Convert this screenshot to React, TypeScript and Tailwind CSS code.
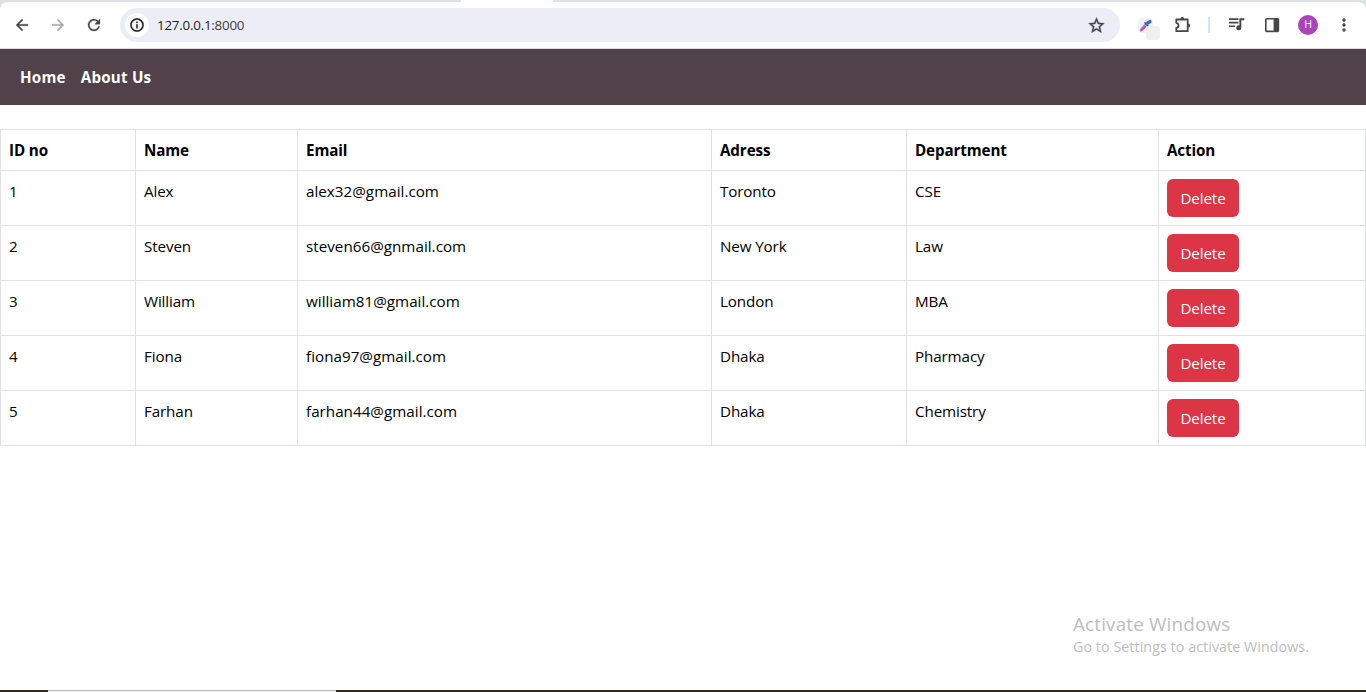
import React from "react";
import { MdMoreVert } from "react-icons/md";

type Student = { id: number; name: string; email: string; address: string; department: string };

const students: Student[] = [
  { id: 1, name: "Alex", email: "alex32@gmail.com", address: "Toronto", department: "CSE" },
  { id: 2, name: "Steven", email: "steven66@gnmail.com", address: "New York", department: "Law" },
  { id: 3, name: "William", email: "william81@gmail.com", address: "London", department: "MBA" },
  { id: 4, name: "Fiona", email: "fiona97@gmail.com", address: "Dhaka", department: "Pharmacy" },
  { id: 5, name: "Farhan", email: "farhan44@gmail.com", address: "Dhaka", department: "Chemistry" },
];

const headings = ["ID no", "Name", "Email", "Adress", "Department", "Action"];

const shapes = {
  back: "M20 11H7.83l5.59-5.59L12 4l-8 8 8 8 1.41-1.41L7.83 13H20v-2z",
  forward: "M12 4l-1.41 1.41L16.17 11H4v2h12.17l-5.58 5.59L12 20l8-8z",
  reload:
    "M17.65 6.35A7.958 7.958 0 0 0 12 4c-4.42 0-7.99 3.58-7.99 8s3.57 8 7.99 8c3.73 0 6.84-2.55 7.73-6h-2.08A5.99 5.99 0 0 1 12 18c-3.31 0-6-2.69-6-6s2.69-6 6-6c1.66 0 3.14.69 4.22 1.78L13 11h7V4l-2.35 2.35z",
  info: "M11 7h2v2h-2zM11 11h2v6h-2zM12 2C6.48 2 2 6.48 2 12s4.48 10 10 10 10-4.48 10-10S17.52 2 12 2zm0 18c-4.41 0-8-3.59-8-8s3.59-8 8-8 8 3.59 8 8-3.59 8-8 8z",
  star: "M22 9.24l-7.19-.62L12 2 9.19 8.63 2 9.24l5.46 4.73L5.82 21 12 17.27 18.18 21l-1.63-7.03L22 9.24zM12 15.4l-3.76 2.27 1-4.28-3.32-2.88 4.38-.38L12 6.1l1.71 4.04 4.38.38-3.32 2.88 1 4.28L12 15.4z",
};

function Glyph({ shape, size, weight, className }: { shape: keyof typeof shapes; size: number; weight: number; className: string }) {
  return (
    <svg className={className} width={size} height={size} viewBox="0 0 24 24" fill="currentColor" stroke="currentColor" strokeWidth={weight}>
      <path d={shapes[shape]} />
    </svg>
  );
}

function Dropper() {
  return (
    <span className="relative block h-[22px] w-[22px]">
      <span className="absolute left-0 top-0 h-[15px] w-[15px] rounded-sm bg-[#f1f3f4]" />
      <svg className="absolute left-0 top-0" width="16" height="16" viewBox="0 0 16 16">
        <path d="M3.2 12 7.4 7.4" stroke="#8f9bd6" strokeWidth="3.2" strokeLinecap="round" />
        <path d="M3.8 11.8 7 8.8" stroke="#f03c9c" strokeWidth="2" strokeLinecap="round" />
        <path d="M7 4.9 10 8.1" stroke="#2f5597" strokeWidth="1.5" strokeLinecap="round" />
        <path d="M9.2 5.4 12 3.6" stroke="#3470bd" strokeWidth="3.4" strokeLinecap="round" />
      </svg>
      <span className="absolute left-2 top-2 h-[14px] w-[14px] rounded-[3px] bg-[#f0f0f0]" />
    </span>
  );
}

function Puzzle() {
  return (
    <svg width="18" height="18" viewBox="0 0 18 18" fill="none">
      <path
        d="M3.3 3.5H14.7V15.2H3.3V11.9C4.7 11.6 5.5 10.7 5.5 9.4S4.7 7.1 3.3 6.8Z"
        stroke="#474747"
        strokeWidth="1.8"
        strokeLinejoin="round"
      />
      <path d="M7.2 3a2 2 0 0 1 4 0ZM15.2 7.4a2 2 0 0 1 0 4Z" fill="#474747" />
    </svg>
  );
}

function Toolbar() {
  return (
    <header className="flex h-[49px] flex-col bg-[#dee1e6]">
      <div className="flex h-[2px] justify-start">
        <span className="ml-[461px] h-[2px] w-[92px] bg-white" />
      </div>
      <div className="flex h-[47px] items-center rounded-t-lg border-b border-[#dadce0] bg-white">
        <Glyph shape="back" size={18} weight={0.4} className="ml-[13px] text-[#474747]" />
        <Glyph shape="forward" size={18} weight={0.3} className="ml-[18px] text-[#a9a9a9]" />
        <Glyph shape="reload" size={18} weight={0.4} className="ml-[18px] text-[#474747]" />
        <div className="ml-[17px] flex h-[34px] w-[1000px] items-center rounded-full bg-[#ebeef7]">
          <span className="ml-[5px] flex h-6 w-6 items-center justify-center rounded-full bg-white">
            <Glyph shape="info" size={16} weight={0.5} className="text-[#1f1f1f]" />
          </span>
          <span className="ml-2 text-[13.4px] leading-5 tracking-[-0.24px] text-[#3c4043]">
            <span className="text-[#1f1f1f]">127.0.0.1</span>:8000
          </span>
          <Glyph shape="star" size={19} weight={0.5} className="ml-auto mr-[14px] text-[#474747]" />
        </div>
        <span className="ml-[18px] mt-[7px]"><Dropper /></span>
        <span className="ml-[13px]"><Puzzle /></span>
        <span className="ml-[17px] h-4 w-[2px] bg-[#d3e3fd]" />
        <svg className="ml-[18px]" width="18" height="16" viewBox="0 0 18 16" fill="#474747">
          <path d="M1 1.2H10.4V2.9H1ZM1 4.8H10.4V6.5H1ZM1 8.4H7.1V10.1H1Z" />
          <path d="M11.4 1.2H16.3V3.2H13.3V10.8a2.5 2.5 0 1 1-1.9-2.4Z" />
        </svg>
        <svg className="ml-[18px]" width="16" height="16" viewBox="0 0 16 16">
          <rect x="1.8" y="1.8" width="12.6" height="12.6" rx="0.8" fill="none" stroke="#474747" strokeWidth="1.6" />
          <path d="M9.6 1.5H14.5V14.5H9.6Z" fill="#474747" />
        </svg>
        <span className="ml-[18px] flex h-5 w-5 items-center justify-center rounded-full bg-[#a945bb] text-[10.5px] text-white">H</span>
        <MdMoreVert className="ml-4 text-[#474747]" size={20} />
      </div>
    </header>
  );
}

function Cell({ children, head = false }: { children: React.ReactNode; head?: boolean }) {
  return (
    <div
      role={head ? "columnheader" : "cell"}
      className={
        head
          ? "border-b border-r border-[#dee2e6] p-2 font-bold tracking-[-0.12px]"
          : "border-b border-r border-[#dee2e6] p-2"
      }
    >
      {children}
    </div>
  );
}

function StudentTable() {
  return (
    <div
      role="table"
      className="mt-6 grid auto-rows-[55px] grid-cols-[135px_162px_414px_195px_252px_207px] grid-rows-[41px] border-l border-t border-[#dee2e6] text-[15.2px] leading-6 tracking-[-0.12px] text-black"
    >
      {headings.map((h) => (
        <Cell key={h} head>{h}</Cell>
      ))}
      {students.map((s) => (
        <React.Fragment key={s.id}>
          <Cell>{s.id}</Cell>
          <Cell>{s.name}</Cell>
          <Cell><span className="tracking-[0.02px]">{s.email}</span></Cell>
          <Cell>{s.address}</Cell>
          <Cell>{s.department}</Cell>
          <Cell>
            <button className="flex h-[38px] w-[72px] items-center justify-center rounded-md bg-[#dc3545] text-white">Delete</button>
          </Cell>
        </React.Fragment>
      ))}
    </div>
  );
}

export default function App() {
  return (
    <div className="flex h-[692px] w-[1366px] flex-col overflow-hidden bg-white font-['Open_Sans','Noto_Sans',sans-serif]">
      <Toolbar />
      <nav className="flex h-14 shrink-0 items-center gap-[15px] bg-[#51424a] px-5 text-[15.2px] font-bold leading-6 tracking-[0.2px] text-white">
        <a>Home</a>
        <a>About Us</a>
      </nav>
      <StudentTable />
      <div className="ml-[1073px] mt-auto pb-[33px] text-[#bdbdbd]">
        <p className="text-[18.8px] leading-[26px] tracking-[0.2px]">Activate Windows</p>
        <p className="text-[14.2px] leading-5 tracking-[0.1px]">Go to Settings to activate Windows.</p>
      </div>
      <div className="flex h-[2px] shrink-0 bg-[#332b20]">
        <span className="ml-12 h-[2px] w-72 border-t border-[#bdbdbd] bg-[#eeeeee]" />
      </div>
    </div>
  );
}
